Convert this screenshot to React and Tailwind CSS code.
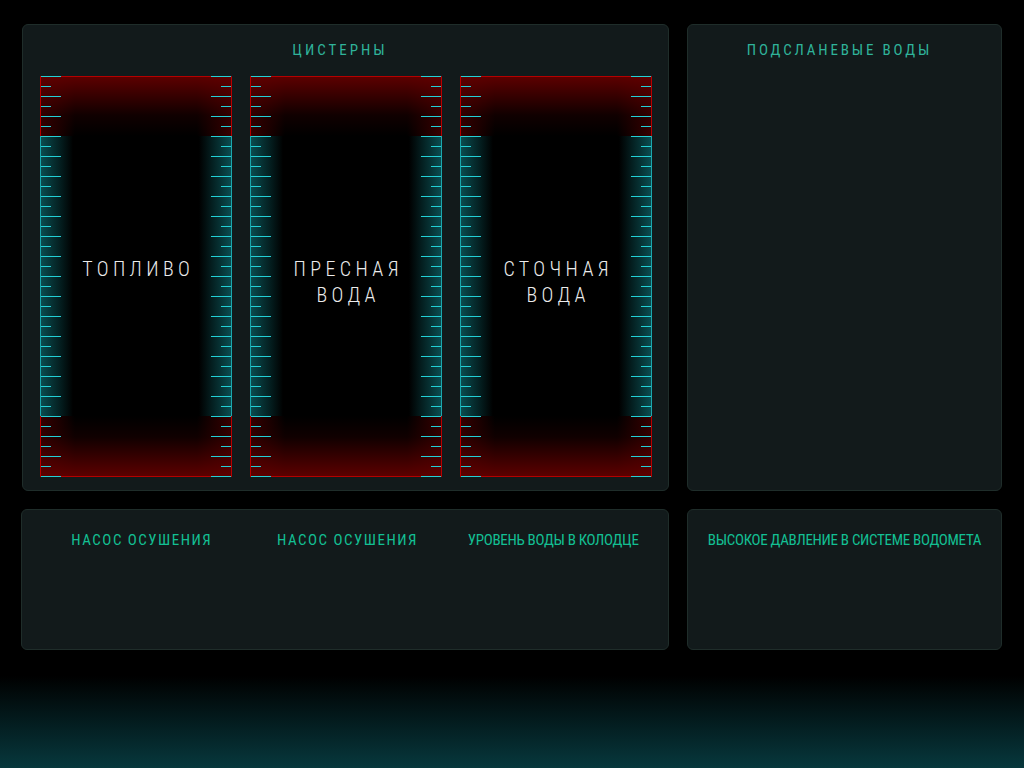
import React from "react";

const FONT = {
  fontFamily:
    '"Roboto Condensed", "Liberation Sans Narrow", "DejaVu Sans Condensed", Roboto, sans-serif',
  fontStretch: "condensed",
};

const tanks = [
  { id: "fuel", label: ["ТОПЛИВО"] },
  { id: "fresh", label: ["ПРЕСНАЯ", "ВОДА"] },
  { id: "waste", label: ["СТОЧНАЯ", "ВОДА"] },
];

// ---------------- SCALE ----------------
const Ticks = ({ side }) => {
  const rows = Array.from({ length: 41 }, (_, i) => i);
  return (
    <svg
      width="20"
      height="401"
      className={`absolute top-0 ${side === "left" ? "left-[1px]" : "right-[1px]"}`}
      shapeRendering="crispEdges"
    >
      {rows.map((i) => {
        const len = i % 2 === 0 ? 20 : 10;
        const x1 = side === "left" ? 0 : 20 - len;
        return (
          <line
            key={i}
            x1={x1}
            x2={x1 + len}
            y1={i * 10 + 0.5}
            y2={i * 10 + 0.5}
            stroke="#22d0d6"
            strokeWidth="1"
          />
        );
      })}
    </svg>
  );
};

const Tank = ({ label }) => (
  <div className="relative w-[192px] h-[401px] flex flex-col bg-black">
    <div className="h-[60px] border-x border-t border-[#b50000] bg-[linear-gradient(to_bottom,rgba(96,0,0,0.95),rgba(40,0,0,0.4)_65%,rgba(0,0,0,0)),linear-gradient(to_right,rgba(80,0,0,0.7),rgba(0,0,0,0)_34px,rgba(0,0,0,0)_calc(100%-34px),rgba(80,0,0,0.7))]" />
    <div className="flex-1 border-x border-[#1ba6ad] bg-[linear-gradient(to_right,#0a4c4f,rgba(0,0,0,0)_32px,rgba(0,0,0,0)_calc(100%-32px),#0a4c4f)]" />
    <div className="h-[61px] border-x border-b border-[#b50000] bg-[linear-gradient(to_top,rgba(96,0,0,0.95),rgba(40,0,0,0.4)_65%,rgba(0,0,0,0)),linear-gradient(to_right,rgba(80,0,0,0.7),rgba(0,0,0,0)_34px,rgba(0,0,0,0)_calc(100%-34px),rgba(80,0,0,0.7))]" />

    <Ticks side="left" />
    <Ticks side="right" />

    <div
      className="absolute inset-x-0 top-[180px] text-center text-[20px] font-light leading-[26px] tracking-[0.22em] text-[#ececec] pl-[0.22em]"
      style={FONT}
    >
      {label.map((line) => (
        <div key={line}>{line}</div>
      ))}
    </div>
  </div>
);

const Card = ({ className = "", children }) => (
  <div
    className={`rounded-md border border-[#1f2d2a] bg-[#121a1b] ${className}`}
  >
    {children}
  </div>
);

const App = () => {
  return (
    <div
      className="w-[1024px] h-[768px] overflow-hidden bg-[linear-gradient(to_bottom,#000_88%,#07383d)] pl-[22px] pt-[24px]"
      style={FONT}
    >
      <div className="grid grid-cols-[647px_315px] grid-rows-[467px_141px] gap-x-[18px] gap-y-[18px]">
        {/* ================= TANKS ================= */}
        <Card className="flex flex-col items-start pl-[17px] pt-[15px]">
          <div className="w-full pr-[28px] text-center text-[15px] leading-5 tracking-[0.2em] text-[#2fb39a]">
            ЦИСТЕРНЫ
          </div>
          <div className="mt-[16px] flex gap-[18px]">
            {tanks.map((t) => (
              <Tank key={t.id} label={t.label} />
            ))}
          </div>
        </Card>

        <Card className="pt-[15px] pr-[10px]">
          <div className="text-center text-[15px] leading-5 tracking-[0.19em] text-[#2fb39a]">
            ПОДСЛАНЕВЫЕ ВОДЫ
          </div>
        </Card>

        {/* ================= PUMPS ================= */}
        <Card className="-ml-px grid grid-cols-3 items-start pl-[17px] pr-[12px] pt-[20px]">
          <div className="text-center text-[15px] leading-5 tracking-[0.1em] text-[#12c094]">
            НАСОС ОСУШЕНИЯ
          </div>
          <div className="text-center text-[15px] leading-5 tracking-[0.1em] text-[#12c094]">
            НАСОС ОСУШЕНИЯ
          </div>
          <div className="text-center text-[15px] leading-5 tracking-[-0.3px] text-[#12c094]">
            УРОВЕНЬ ВОДЫ В КОЛОДЦЕ
          </div>
        </Card>

        <Card className="pt-[20px]">
          <div className="text-center text-[15px] leading-5 tracking-[-0.3px] text-[#12c094]">
            ВЫСОКОЕ ДАВЛЕНИЕ В СИСТЕМЕ ВОДОМЕТА
          </div>
        </Card>
      </div>
    </div>
  );
};

export default App;
